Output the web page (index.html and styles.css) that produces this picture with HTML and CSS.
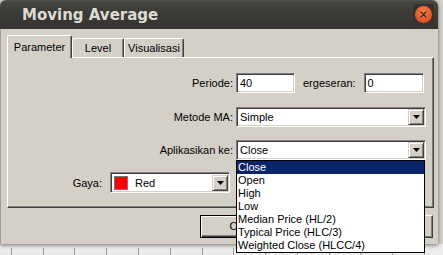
FILE: index.html
```html
<!DOCTYPE html>
<html>
<head>
<meta charset="utf-8">
<link rel="stylesheet" href="styles.css">
</head>
<body>
<div class="page">
  <div class="window">
    <div class="titlebar">
      <span class="title">Moving Average</span>
      <span class="close-wrap"><span class="close">
        <svg width="17" height="17" viewBox="0 0 17 17"><path d="M6 6 L11 11 M11 6 L6 11" stroke="#4a2a1c" stroke-width="1.3" stroke-linecap="round"/></svg>
      </span></span>
    </div>
    <div class="body">
      <div class="tabs">
        <div class="tab active tab-param">Parameter</div>
        <div class="tab tab-level">Level</div>
        <div class="tab tab-vis">Visualisasi</div>
      </div>
      <div class="panel">
        <div class="row row-periode">
          <label class="lbl lbl-main">Periode:</label>
          <div class="input w-periode">40</div>
          <label class="lbl lbl-shift">ergeseran:</label>
          <div class="input w-shift">0</div>
        </div>
        <div class="row row-metode">
          <label class="lbl lbl-main">Metode MA:</label>
          <div class="select w-wide">
            <span class="value">Simple</span>
            <span class="arrow"><svg width="7" height="4" viewBox="0 0 7 4"><path d="M0 0H7L3.5 4Z" fill="#000"/></svg></span>
          </div>
        </div>
        <div class="row row-apply">
          <label class="lbl lbl-main">Aplikasikan ke:</label>
          <div class="select w-wide">
            <span class="value">Close</span>
            <span class="arrow"><svg width="7" height="4" viewBox="0 0 7 4"><path d="M0 0H7L3.5 4Z" fill="#000"/></svg></span>
          </div>
        </div>
        <div class="row row-gaya">
          <label class="lbl lbl-gaya">Gaya:</label>
          <div class="select w-gaya">
            <span class="swatch"></span>
            <span class="value value-gaya">Red</span>
            <span class="arrow"><svg width="7" height="4" viewBox="0 0 7 4"><path d="M0 0H7L3.5 4Z" fill="#000"/></svg></span>
          </div>
        </div>
      </div>
      <div class="buttons">
        <div class="btn btn-default">OK</div>
        <div class="btn"></div>
        <div class="btn"></div>
      </div>
    </div>
  </div>
  <div class="chart"></div>
  <ul class="dropdown">
    <li class="sel">Close</li>
    <li>Open</li>
    <li>High</li>
    <li>Low</li>
    <li>Median Price (HL/2)</li>
    <li>Typical Price (HLC/3)</li>
    <li>Weighted Close (HLCC/4)</li>
  </ul>
</div>
</body>
</html>
```
FILE: styles.css
```css
* { box-sizing: border-box; }
html, body { margin: 0; padding: 0; }
body {
  width: 443px;
  height: 255px;
  overflow: hidden;
  background: #d6d3cd;
  font-family: "Liberation Sans", Arial, sans-serif;
  font-size: 11px;
  color: #000;
}
.page {
  position: relative;
  width: 443px;
  height: 255px;
}
.window {
  width: 438px;
  height: 244px;
  display: flex;
  flex-direction: column;
  border-radius: 6px 6px 0 0;
  box-shadow: 0 1px 4px rgba(0,0,0,0.55);
  position: relative;
  z-index: 1;
}
.titlebar {
  height: 29px;
  flex: none;
  display: flex;
  align-items: center;
  padding-left: 22px;
  border-radius: 6px 6px 0 0;
  background: linear-gradient(#55544f 0, #45443f 2px, #3c3b37 12px, #353430 29px);
}
.title {
  flex: 1;
  font-family: "DejaVu Sans", sans-serif;
  font-weight: bold;
  font-size: 15px;
  color: #dfdbd2;
}
.close-wrap {
  width: 21px;
  height: 21px;
  margin-right: 4px;
  display: flex;
  align-items: center;
  justify-content: center;
  background: #34332f;
  border-radius: 2px;
}
.close {
  width: 17px;
  height: 17px;
  border-radius: 50%;
  background: radial-gradient(circle at 50% 35%, #f58357 0, #e55b2b 55%, #c9431a 100%);
  box-shadow: 0 0 0 0.5px #6a3a28;
  display: block;
}
.close svg { display: block; }
.body {
  flex: 1;
  background: #d4d0c8;
  border-left: 1px solid #a39f97;
  padding: 6px 0 0 6px;
  display: flex;
  flex-direction: column;
}
.tabs {
  display: flex;
  align-items: flex-end;
  height: 22px;
  position: relative;
  z-index: 2;
}
.tab {
  height: 19px;
  border-top: 1px solid #fff;
  border-left: 1px solid #fff;
  border-right: 1px solid #404040;
  box-shadow: inset -1px 0 #808080;
  border-radius: 2px 2px 0 0;
  text-align: center;
  line-height: 18px;
  background: #d4d0c8;
}
.tab.active {
  height: 23px;
  margin-bottom: -1px;
  line-height: 22px;
}
.tab-param { width: 65px; }
.tab-level { width: 52px; }
.tab-vis { width: 60px; }
.panel {
  width: 427px;
  height: 151px;
  flex: none;
  border-top: 1px solid #fff;
  border-left: 1px solid #fff;
  border-right: 1px solid #404040;
  border-bottom: 1px solid #404040;
  box-shadow: inset -1px -1px #808080;
  padding-top: 15px;
  display: flex;
  flex-direction: column;
}
.row {
  display: flex;
  align-items: center;
}
.row-metode { margin-top: 14px; }
.row-apply { margin-top: 13px; }
.row-gaya { margin-top: 12px; }
.lbl { white-space: nowrap; }
.lbl-main { width: 225px; text-align: right; margin-right: 3px; }
.lbl-shift { margin: 0 8px 0 8px; }
.lbl-gaya { width: 94px; text-align: right; margin-right: 8px; }
.input {
  height: 20px;
  background: #fff;
  border: 1px solid;
  border-color: #808080 #fff #fff #808080;
  box-shadow: inset 1px 1px #404040, inset -1px -1px #d4d0c8;
  padding-left: 3px;
  line-height: 18px;
}
.w-periode { width: 59px; }
.w-shift { width: 60px; }
.select {
  height: 20px;
  background: #fff;
  border: 1px solid;
  border-color: #808080 #fff #fff #808080;
  box-shadow: inset 1px 1px #404040, inset -1px -1px #d4d0c8;
  padding: 1px;
  display: flex;
  align-items: center;
}
.w-wide { width: 190px; }
.w-gaya { width: 120px; height: 21px; }
.value {
  flex: 1;
  padding-left: 2px;
  line-height: 16px;
}
.value-gaya { padding-left: 7px; }
.swatch {
  width: 14px;
  height: 14px;
  margin-left: 2px;
  background: #ff0000;
  border: 1px solid #7a7a7a;
}
.arrow {
  width: 16px;
  height: 16px;
  flex: none;
  background: #d4d0c8;
  border: 1px solid;
  border-color: #d4d0c8 #404040 #404040 #d4d0c8;
  box-shadow: inset 1px 1px #fff, inset -1px -1px #808080;
  display: flex;
  align-items: center;
  justify-content: center;
}
.arrow svg { display: block; }
.buttons {
  display: flex;
  gap: 4px;
  justify-content: flex-end;
  padding-right: 5px;
  margin-top: 7px;
}
.btn {
  width: 75px;
  height: 23px;
  border: 1px solid;
  border-color: #fff #404040 #404040 #fff;
  box-shadow: inset -1px -1px #808080;
  line-height: 21px;
  text-align: center;
  background: #d4d0c8;
}
.btn-default {
  border: 1px solid #000;
  box-shadow: inset 1px 1px #fff, inset -1px -1px #404040, inset -2px -2px #808080;
}
.chart {
  height: 11px;
  background:
    repeating-linear-gradient(90deg, transparent 0 11px, #9a9a9a 11px 12px, transparent 12px 31.75px) 0 4px / 100% 7px no-repeat,
    #ececec;
}
.dropdown {
  position: absolute;
  left: 236px;
  top: 160px;
  width: 189px;
  margin: 0;
  padding: 0;
  list-style: none;
  background: #fff;
  border: 1px solid #000;
  z-index: 5;
}
.dropdown li {
  height: 13px;
  line-height: 13px;
  padding-left: 1px;
  white-space: nowrap;
}
.dropdown li.sel {
  background: #0a246a;
  color: #fff;
}
```
